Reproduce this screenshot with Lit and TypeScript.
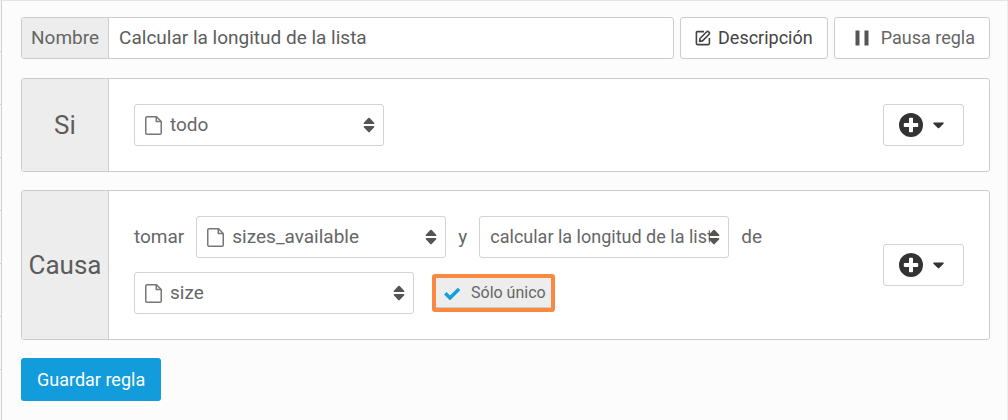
import { LitElement, html, svg, css, nothing } from "lit";
import { customElement, property, state } from "lit/decorators.js";

const fileIcon = html`<svg class="file" viewBox="0 0 17 19" width="17" height="19" aria-hidden="true">
  <path d="M2 .75H11.5L16.25 5.5V17a1.25 1.25 0 0 1-1.25 1.25H2A1.25 1.25 0 0 1 .75 17V2A1.25 1.25 0 0 1 2 .75Z" />
  <path d="M11.25 1V5.5H16" />
</svg>`;

const sortIcon = html`<svg class="sort" viewBox="0 0 12 16" width="12" height="16" aria-hidden="true">
  <path d="M5.3 1.1a1 1 0 0 1 1.4 0L11 5.4C11.7 6.2 11.3 7 10.4 7H1.6C.7 7 .3 6.2 1 5.4Z" />
  <path d="M5.3 14.9a1 1 0 0 0 1.4 0L11 10.6C11.7 9.8 11.3 9 10.4 9H1.6C.7 9 .3 9.8 1 10.6Z" />
</svg>`;

const editIcon = html`<svg class="line" viewBox="0 0 16 16" width="16" height="16" aria-hidden="true">
  <path d="M9 1.6H2.4a1 1 0 0 0-1 1v11a1 1 0 0 0 1 1h11a1 1 0 0 0 1-1V8" />
  <path d="M5 8.500 11.700 1.800a1.300 1.300 0 0 1 1.800 0l.6.6a1.300 1.300 0 0 1 0 1.800L7.500 10.900 4.600 11.400Z" />
</svg>`;

const pauseIcon = html`<svg class="solid" viewBox="0 0 14 16" width="14" height="16" aria-hidden="true">
  <path d="M.5.5h4v15h-4zM9.500.5h4v15h-4z" />
</svg>`;

const plusIcon = html`<svg class="solid" viewBox="0 0 24 24" width="24" height="24" aria-hidden="true">
  <path fill-rule="evenodd" d="M12 0a12 12 0 1 1 0 24a12 12 0 0 1 0-24ZM10.800 4.800a.8.8 0 0 0-.8.8V10H5.600a.8.8 0 0 0-.8.8v2.400a.8.8 0 0 0 .8.8H10v4.400a.8.8 0 0 0 .8.8h2.400a.8.8 0 0 0 .8-.8V14h4.400a.8.8 0 0 0 .8-.8v-2.400a.8.8 0 0 0-.8-.8H14V5.600a.8.8 0 0 0-.8-.8Z" />
</svg>`;

const caretIcon = html`<svg class="solid" viewBox="0 0 11 7" width="11" height="7" aria-hidden="true">
  <path d="M1 .5H10C10.800.5 11 1.200 10.500 1.700L6.200 6a1 1 0 0 1-1.400 0L.5 1.700C0 1.200.2.5 1 .5Z" />
</svg>`;

const checkMark = svg`<path d="M1.300 6.300 6 11 15.100 1.900" />`;

@customElement("rule-select")
class RuleSelect extends LitElement {
  static styles = css`
    :host {
      display: block;
      width: 250px;
    }
    :host([wide]) {
      width: 280px;
    }
    .box {
      display: grid;
      grid-template-columns: 36px 1fr 21px;
      align-items: center;
    }
    select {
      grid-area: 1 / 1 / 2 / 4;
      appearance: none;
      width: 100%;
      height: 42px;
      margin: 0;
      padding: 0 18px 0 10px;
      border: 1px solid #d3d3d3;
      border-radius: 3px;
      background: #fff;
      color: #666;
      font: 18px/24px Roboto, sans-serif;
    }
    .with-file select {
      padding-left: 35px;
      font-size: 19px;
    }
    svg {
      grid-row: 1;
      pointer-events: none;
    }
    .file {
      grid-column: 1;
      margin-left: 11px;
      fill: none;
      stroke: #777;
      stroke-width: 1.5;
      stroke-linejoin: round;
    }
    .sort {
      grid-column: 3;
      fill: #555;
    }
  `;

  @property() label = "";
  @property() value = "";
  @property({ type: Boolean }) file = false;

  render() {
    return html`<div class="box ${this.file ? "with-file" : ""}">
      <select aria-label=${this.label}>
        <option selected>${this.value}</option>
      </select>
      ${this.file ? fileIcon : nothing} ${sortIcon}
    </div>`;
  }
}

@customElement("rule-section")
class RuleSection extends LitElement {
  static styles = css`
    :host {
      display: flex;
      border: 1px solid #ccc;
      border-radius: 3px;
      background: #fff;
    }
    .title {
      display: flex;
      flex: none;
      align-items: center;
      justify-content: center;
      width: 86px;
      margin: 0;
      border-right: 1px solid #ccc;
      border-radius: 2px 0 0 2px;
      background: #ededed;
      color: #5c5c5c;
      font: 26px/32px Roboto, sans-serif;
    }
    .body {
      display: flex;
      flex: 1;
      align-items: center;
      justify-content: space-between;
      gap: 24px;
      min-width: 0;
      padding: 25px;
    }
    .add {
      display: flex;
      flex: none;
      align-items: center;
      gap: 10px;
      height: 42px;
      padding: 0 19px 0 15px;
      border: 1px solid #d3d3d3;
      border-radius: 3px;
      background: #fff;
      color: #333;
    }
    .solid {
      fill: currentColor;
    }
  `;

  @property() heading = "";

  render() {
    return html`
      <h2 class="title">${this.heading}</h2>
      <div class="body">
        <slot></slot>
        <button class="add" type="button" aria-label="Añadir" aria-haspopup="menu">${plusIcon}${caretIcon}</button>
      </div>
    `;
  }
}

@customElement("app-root")
class AppRoot extends LitElement {
  static styles = css`
    :host {
      display: grid;
      grid-template-columns: 1px 1fr;
      min-height: 100vh;
      box-sizing: border-box;
      border-top: 1px solid #e4e4e4;
      color: #666;
      font: 19px/24px Roboto, sans-serif;
    }
    .rail {
      background: repeating-linear-gradient(#fafafa 0 50px, #d4d4d4 50px 51px, #fafafa 51px 53px);
    }
    .page {
      padding: 16px 17px 16px 19px;
      border-left: 1px solid #d0d0d0;
      border-right: 1px solid #eee;
      background: #fcfcfc;
    }
    .form {
      display: grid;
      gap: 18px;
      justify-items: stretch;
      margin: 0;
    }
    .top {
      display: flex;
      gap: 6px;
      margin-bottom: 1px;
    }
    .name {
      display: flex;
      flex: 1;
      min-width: 0;
      box-sizing: border-box;
      height: 42px;
      border: 1px solid #ccc;
      border-radius: 3px;
      background: #fff;
    }
    .name label {
      padding: 8px 9px;
      border-right: 1px solid #ccc;
      background: #ededed;
    }
    .name input {
      flex: 1;
      min-width: 0;
      padding: 0 10px;
      border: 0;
      background: none;
      color: #5c5c5c;
      font: inherit;
    }
    .btn {
      display: flex;
      align-items: center;
      box-sizing: border-box;
      height: 42px;
      padding: 0 14px;
      border: 1px solid #ccc;
      border-radius: 3px;
      background: #fff;
      color: #666;
      font: inherit;
      font-size: 18px;
    }
    .describe {
      gap: 7px;
      color: #444;
    }
    .pause {
      gap: 12px;
      padding-left: 20px;
    }
    .line {
      fill: none;
      stroke: currentColor;
      stroke-width: 1.600;
      stroke-linejoin: round;
    }
    .solid {
      fill: #555;
    }
    .sentence {
      display: flex;
      flex-wrap: wrap;
      flex: 1;
      align-items: center;
      gap: 14px 12px;
      max-width: 640px;
    }
    .unique {
      display: flex;
      align-items: center;
      box-sizing: border-box;
      height: 38px;
      margin-left: 6px;
      padding: 0 5px 0 8px;
      border: 4px solid #f98840;
      border-radius: 3px;
      background: #ededed;
      box-shadow: inset 0 -1px #ccc;
      font-size: 16px;
    }
    .tick {
      display: grid;
      align-items: center;
      width: 27px;
    }
    .tick input,
    .tick svg {
      grid-area: 1 / 1;
    }
    .tick input {
      appearance: none;
      width: 16px;
      height: 16px;
      margin: 0;
    }
    .tick svg {
      fill: none;
      stroke: #159fdc;
      stroke-width: 3.500;
      pointer-events: none;
    }
    .save {
      justify-self: start;
      height: 43px;
      padding: 0 16px;
      border: 0;
      border-radius: 3px;
      background: #129cdb;
      color: #fff;
      font: 18px/24px Roboto, sans-serif;
    }
  `;

  @state() private unique = true;

  render() {
    return html`
      <div class="rail"></div>
      <main class="page">
        <form class="form" @submit=${(e: Event) => e.preventDefault()}>
          <div class="top">
            <div class="name">
              <label for="name">Nombre</label>
              <input id="name" type="text" value="Calcular la longitud de la lista" />
            </div>
            <button class="btn describe" type="button">${editIcon}<span>Descripción</span></button>
            <button class="btn pause" type="button">${pauseIcon}<span>Pausa regla</span></button>
          </div>
          <rule-section heading="Si">
            <rule-select label="Condición" value="todo" file></rule-select>
          </rule-section>
          <rule-section heading="Causa">
            <div class="sentence">
              <span>tomar</span>
              <rule-select label="Atributo" value="sizes_available" file></rule-select>
              <span>y</span>
              <rule-select label="Acción" value="calcular la longitud de la lista"></rule-select>
              <span>de</span>
              <rule-select label="Destino" value="size" file wide></rule-select>
              <label class="unique">
                <span class="tick">
                  <input
                    type="checkbox"
                    .checked=${this.unique}
                    @change=${(e: Event) => (this.unique = (e.target as HTMLInputElement).checked)}
                  />
                  ${this.unique
                    ? html`<svg viewBox="0 0 16 13" width="16" height="13" aria-hidden="true">${checkMark}</svg>`
                    : nothing}
                </span>
                <span>Sólo único</span>
              </label>
            </div>
          </rule-section>
          <button class="save" type="submit">Guardar regla</button>
        </form>
      </main>
    `;
  }
}
